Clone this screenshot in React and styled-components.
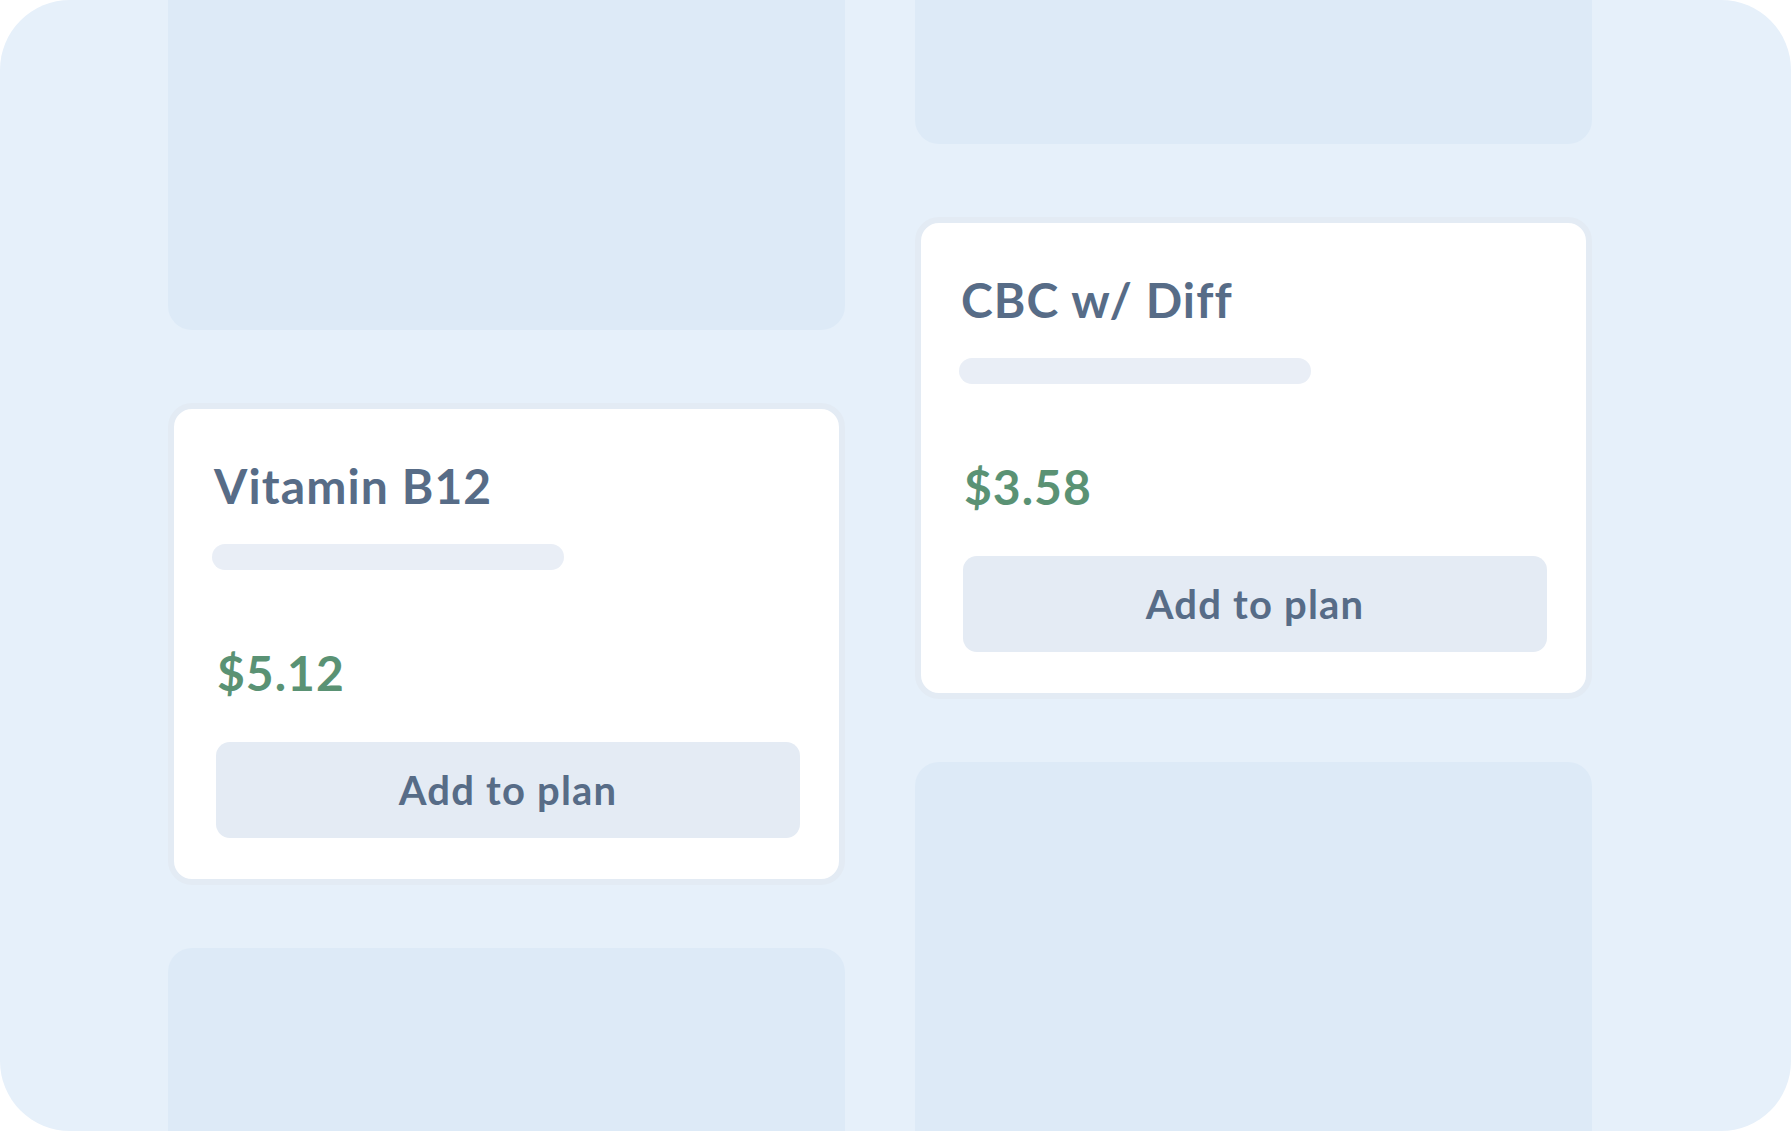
import styled, { createGlobalStyle } from "styled-components";

const GlobalStyle = createGlobalStyle`
  html, body {
    margin: 0;
    padding: 0;
    background: #ffffff;
  }
  * {
    box-sizing: border-box;
  }
`

const Frame = styled.div`
    width: 1791px;
    height: 1131px;
    border-radius: 70px;
    background-color: #e6f0fa;
    overflow: hidden;
    display: flex;
    flex-direction: row;
    align-items: flex-start;
    gap: 70px;
    padding-left: 168px;
    font-family: Lato, "Open Sans", sans-serif;
`

const Column = styled.div`
    width: 677px;
    flex-shrink: 0;
    display: flex;
    flex-direction: column;
    margin-top: ${(p) => p.$offset}px;
`

const Placeholder = styled.div`
    width: 100%;
    height: 482px;
    border-radius: 24px;
    background-color: #ddeaf7;
`

const Card = styled.div`
    width: 100%;
    height: 482px;
    margin: 73px 0 63px;
    border: 6px solid #e3ebf4;
    border-radius: 24px;
    background-color: #ffffff;
    padding: 48px 40px 0 40px;
    display: flex;
    flex-direction: column;
    align-items: flex-start;
`

const Title = styled.h3`
    margin: 0;
    font-size: 48px;
    line-height: 1.2;
    font-weight: 700;
    letter-spacing: 1.1px;
    color: #576c87;
`

const SkeletonLine = styled.div`
    margin-top: 29px;
    margin-left: -2px;
    width: 352px;
    height: 26px;
    border-radius: 13px;
    background-color: #e9eef6;
`

const Price = styled.div`
    margin-top: 74px;
    margin-left: 3px;
    font-size: 48px;
    line-height: 1.2;
    font-weight: 700;
    letter-spacing: 1px;
    color: #5a9274;
`

const AddButton = styled.button`
    margin-top: 41px;
    margin-left: 2px;
    width: calc(100% - 1px);
    height: 96px;
    border: none;
    border-radius: 14px;
    background-color: #e4ebf4;
    color: #576c87;
    font-family: inherit;
    font-size: 40px;
    font-weight: 700;
    letter-spacing: 1.2px;
    line-height: 1.2;
    cursor: pointer;
`

const items = [
    { name: "Vitamin B12", price: "$5.12", offset: -152 },
    { name: "CBC w/ Diff", price: "$3.58", offset: -338 },
]

const App = () => {
    return (
        <>
            <GlobalStyle />
            <Frame>
                {items.map((item) => (
                    <Column key={item.name} $offset={item.offset}>
                        <Placeholder />
                        <Card>
                            <Title>{item.name}</Title>
                            <SkeletonLine />
                            <Price>{item.price}</Price>
                            <AddButton>Add to plan</AddButton>
                        </Card>
                        <Placeholder />
                    </Column>
                ))}
            </Frame>
        </>
    )
}

export default App;
